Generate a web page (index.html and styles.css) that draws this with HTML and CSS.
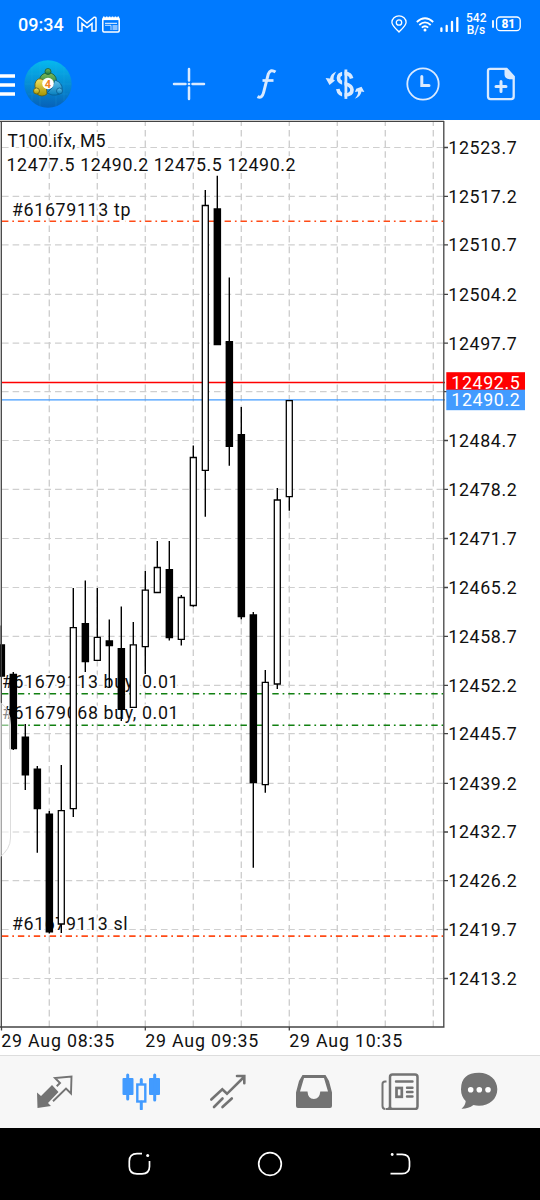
FILE: index.html
```html
<!DOCTYPE html>
<html lang="en">
<head>
<meta charset="utf-8">
<title>T100.ifx, M5</title>
<link rel="stylesheet" href="styles.css">
</head>
<body>
<div class="screen">
  <header class="top">
    <div class="status">
      <div class="status-left">
        <span class="clock">09:34</span>
        <svg class="mail" width="20" height="16" viewBox="0 0 20 16"><path d="M1 14.2V2.5Q1 .9 2.8 1.2L10 7l7.200-5.800Q19 .9 19 2.500V14.200Q19 15 18.200 15H15V7.500L10 11.500 5 7.500V15H1.800Q1 15 1 14.200Z" fill="none" stroke="#fff" stroke-width="1.500"/></svg>
        <svg width="18" height="17" viewBox="0 0 18 17"><rect x=".8" y="2" width="16.400" height="14" rx="1.200" fill="none" stroke="#fff" stroke-width="1.500"/><path d="M1 3h16" stroke="#fff" stroke-width="2.200"/><path d="M1 1.200h16" stroke="#fff" stroke-width="1.500" stroke-dasharray="1.600 1.300"/><path d="M3 7.300h12" stroke="#fff"/><path d="M3 9.300h6v4.700" fill="none" stroke="#fff" stroke-width=".8"/><path d="M10.500 9h5v5h-5z" fill="#8cc2ff"/></svg>
      </div>
      <div class="status-right">
        <svg width="16" height="18" viewBox="0 0 16 18"><path d="M8 17C4.500 13.500.9 10.500.9 7.300a7.100 6.500 0 0 1 14.200 0C15.100 10.500 11.500 13.500 8 17Z" fill="none" stroke="#fff" stroke-width="1.300"/><circle cx="8" cy="7.500" r="2.700" fill="none" stroke="#fff" stroke-width="1.300"/></svg>
        <svg class="wifi" width="18" height="15" viewBox="0 0 18 15"><g fill="none" stroke="#fff" stroke-width="1.800"><path d="M.8 5Q9-2.500 17.200 5"/><path d="M3.300 8Q9 2.800 14.700 8"/><path d="M5.800 10.700Q9 7.800 12.200 10.700"/></g><circle cx="9" cy="13" r="1.500" fill="#fff"/></svg>
        <svg class="signal" width="19" height="15" viewBox="0 0 19 15"><path d="M1.400 11.500V14M6.700 9V14M12 5V14M17.300 1V14" stroke="#fff" stroke-width="2.300" stroke-linecap="round"/></svg>
        <div class="speed"><span>542</span><span>B/s</span></div>
        <svg width="29" height="16" viewBox="0 0 29 16"><path d="M1 5v6" stroke="#fff" stroke-width="1.800" stroke-linecap="round"/><rect x="4.600" y="1" width="23.600" height="13.600" rx="3.500" fill="none" stroke="#fff" stroke-width="1.300"/><text class="battery" x="16.300" y="11.900" text-anchor="middle">81</text></svg>
      </div>
    </div>
    <div class="toolbar">
      <svg class="menu" width="15" height="24" viewBox="0 0 15 24"><path d="M0 3h15M0 12h15M0 21h15" stroke="#fff" stroke-width="3.600"/></svg>
      <svg class="logo" width="48" height="48" viewBox="0 0 48 48">
        <defs>
          <linearGradient id="sky" x2="0" y2="1"><stop stop-color="#06b9ef"/><stop offset="1" stop-color="#0761b8"/></linearGradient>
          <linearGradient id="green" x2="0" y2="1"><stop stop-color="#7dba58"/><stop offset="1" stop-color="#167846"/></linearGradient>
          <linearGradient id="gold" x2="0" y2="1"><stop stop-color="#f3e263"/><stop offset="1" stop-color="#a39300"/></linearGradient>
          <linearGradient id="aqua" x2="0" y2="1"><stop stop-color="#62c0e8"/><stop offset="1" stop-color="#087fbe"/></linearGradient>
        </defs>
        <circle cx="24" cy="24" r="23.700" fill="url(#sky)"/>
        <path d="M8 7v34M16 2v44M32 2v44M40 7v34M4 14h40M1 24h46M4 34h40" stroke="#2fb4e8" stroke-width=".5" opacity=".35"/>
        <path d="M16 23q-2-7 5-10h6q7 3 5 11l-5 3h-7z" fill="url(#green)" stroke="#155b37" stroke-width=".8"/>
        <circle cx="24" cy="11.500" r="3" fill="url(#green)" stroke="#155b37" stroke-width=".8"/>
        <path d="M14 19q6-1 8 5l1 10q-5 4-10 0l-1-4q-3-7 2-11z" fill="url(#gold)" stroke="#5f5a12" stroke-width=".8"/>
        <circle cx="12.500" cy="31" r="3" fill="url(#gold)" stroke="#5f5a12" stroke-width=".8"/>
        <path d="M31 20q8 3 7 10-1 6-10 5l-5-2 5-5z" fill="url(#aqua)" stroke="#075b91" stroke-width=".8"/>
        <circle cx="35.500" cy="31" r="3" fill="url(#aqua)" stroke="#075b91" stroke-width=".8"/>
        <circle cx="24" cy="23.500" r="5.800" fill="#fff"/>
        <text class="four" x="24" y="27.500" text-anchor="middle">4</text>
      </svg>
      <div class="tools">
        <svg width="34" height="34" viewBox="0 0 34 34"><path d="M17 2v11.500M17 20.500V32M2 17h11.500M20.500 17H32" stroke="#d9eaff" stroke-width="2.500" stroke-linecap="round"/><circle cx="17" cy="17" r="1.300" fill="#d9eaff"/></svg>
        <svg width="34" height="34" viewBox="0 0 34 34"><path d="M25.500 5Q20.500 1.500 18.300 7L13.600 25.500Q12 32 7.500 29.700" fill="none" stroke="#d9eaff" stroke-width="3"/><path d="M12.500 13.500h11" stroke="#d9eaff" stroke-width="2.700"/></svg>
        <svg width="40" height="34" viewBox="0 0 40 34"><path d="M26.600 11.500Q25.500 6.300 20 6.300 13.500 6.300 13.500 11 13.500 15 20 16.700 27 18.500 27 22.800 27 28 20 28 14 28 12.800 22" fill="none" stroke="#d9eaff" stroke-width="3.700"/><path d="M18.300 3v28" stroke="#007aff" stroke-width="2.400"/><path d="M20.900 2.500v29.400" stroke="#d9eaff" stroke-width="2.800"/><path d="M11.200 4.500Q5.500 7 5 11.500L.6 11 4.500 18 10 13.500 8.400 12.500Q8.500 8.500 11.200 4.500Z" fill="#d9eaff"/><path d="M29.800 31.800Q33.500 28 33 24.600L30 25 31.200 21.800 36.500 19.800 39.400 25 36.500 24.500Q35.500 29.800 29.800 31.800Z" fill="#d9eaff"/></svg>
        <svg width="34" height="34" viewBox="0 0 34 34"><circle cx="17" cy="17" r="15.700" fill="none" stroke="#d9eaff" stroke-width="1.800"/><path d="M15.800 9.500v9h7.200" fill="none" stroke="#d9eaff" stroke-width="3" stroke-linecap="round"/></svg>
        <svg width="30" height="34" viewBox="0 0 30 34"><path d="M4 1.800h16.500l7.200 8V29.500q0 2.600-2.600 2.600H4.500Q2 32.100 2 29.500V3.800q0-2 2-2Z" fill="none" stroke="#d9eaff" stroke-width="2.300"/><path d="M18.500 1.500h2.800l7 8v2.700h-4.500q-5.500-.5-5.300-5z" fill="#d9eaff"/><path d="M15 14.500v10M10 19.500h10" stroke="#d9eaff" stroke-width="3" stroke-linecap="round"/></svg>
      </div>
    </div>
  </header>

  <main class="chart">
    <svg width="540" height="935" viewBox="0 120 540 935">
      <path class="grid" d="M2 147.500H443M2 196.300H443M2 244.800H443M2 294.300H443M2 343.200H443M2 391.700H443M2 440.500H443M2 489.300H443M2 538.500H443M2 587.500H443M2 636.300H443M2 685.300H443M2 733.600H443M2 783.300H443M2 832H443M2 880.700H443M2 929.500H443M2 978.500H443"/>
      <path class="grid vertical" d="M49.300 1027V122M97.300 1027V122M145.300 1027V122M193.300 1027V122M241.300 1027V122M289.300 1027V122M337.300 1027V122M385.300 1027V122M433.300 1027V122"/>

      <path class="order target" d="M2 221.200H443"/>
      <path class="order stop" d="M2 936.200H443"/>
      <path class="order buy" d="M2 693.700H443M2 725.200H443"/>
      <path class="ask" d="M2 382.500H445"/>
      <path class="bid" d="M2 399.900H445"/>

      <g class="label halo">
        <text x="7.500" y="147" textLength="98">T100.ifx, M5</text>
        <text x="6.500" y="171" textLength="289">12477.5 12490.2 12475.5 12490.2</text>
        <text x="12" y="215.500" textLength="118.500">#61679113 tp</text>
        <text x="2" y="688" textLength="176.500">#61679113 buy, 0.01</text>
        <text x="2" y="719.300" textLength="176.500">#61679068 buy, 0.01</text>
        <text x="12" y="930.300" textLength="115.500">#61679113 sl</text>
      </g>

      <!-- wicks -->
      <path class="wick" d="M1.300 625.500V677M13.300 672V750M25.300 724V790M37.300 766V852.700M49.300 811V933.500M61.300 765V933M73.300 588V817M85.300 580.500V672M97.300 588V661M109.300 619.500V687M121.300 606.500V721M133.300 622V708M145.300 571V674M157.300 541V593M169.300 541V640.500M181.300 595V645.500M193.300 445.500V606.800M205.300 190V516.700M217.300 175.700V345M229.300 277.500V465.700M241.300 407V619.300M253.300 612V867.700M265.300 670V792.700M277.300 488V689M289.300 400V510.700"/>
      <!-- falling candles -->
      <path class="fall" d="M0 644.300h5.100v32.500H0zM9.600 673.700h7.500v75.600h-7.500zM21.600 736.600h7.500v39h-7.500zM33.600 768.600h7.500V809.300h-7.500zM45.600 813.600h7.500V932.600h-7.500zM81.600 623h7.500v39.300h-7.500zM105.600 640.300h7.500v6h-7.500zM117.600 648h7.500v62h-7.500zM165.600 569h7.500v69.300h-7.500zM213.600 208.300h7.500V345.200h-7.500zM225.600 341h7.500V447h-7.500zM237.600 434h7.500V617.200h-7.500zM249.600 614.200h7.500V783.200h-7.500z"/>
      <!-- rising candles -->
      <path class="rise" d="M58.300 810.700h6V924h-6zM70.300 627.600h6V808.700h-6zM94.300 637.300h6V660.300h-6zM130.300 644.800h6V707.300h-6zM142.300 590.200h6V646.700h-6zM154.300 567.500h6V592.500h-6zM178.300 597.500h6V639.300h-6zM190.300 457.500h6V605.500h-6zM202.300 205.500h6V470.300h-6zM262.300 682.300h6V784.700h-6zM274.300 500h6V684h-6zM286.300 400.700h6V496.700h-6z"/>

      <path class="frame" d="M0 121.300H444M1.300 121V1027M0 1027H444.500M443.800 121V1027.500M1.500 1027v3.500M145.300 1027v3.500M289.300 1027v3.500"/>
      <path class="frame" d="M444 147.500h4M444 196.300h4M444 244.800h4M444 294.300h4M444 343.200h4M444 391.700h4M444 440.500h4M444 489.300h4M444 538.500h4M444 587.500h4M444 636.300h4M444 685.300h4M444 733.600h4M444 783.300h4M444 832h4M444 880.700h4M444 929.500h4M444 978.500h4"/>
      <path class="handle" d="M-1 702Q10.500 708 10.500 725V838Q10.500 849-1 858Z"/>

      <g class="label">
        <text x="448.300" y="153.800" textLength="68.500">12523.7</text>
        <text x="448.300" y="202.600" textLength="68.500">12517.2</text>
        <text x="448.300" y="251.200" textLength="68.500">12510.7</text>
        <text x="448.300" y="300.600" textLength="68.500">12504.2</text>
        <text x="448.300" y="349.500" textLength="68.500">12497.7</text>
        <text x="448.300" y="446.800" textLength="68.500">12484.7</text>
        <text x="448.300" y="495.600" textLength="68.500">12478.2</text>
        <text x="448.300" y="544.800" textLength="68.500">12471.7</text>
        <text x="448.300" y="593.800" textLength="68.500">12465.2</text>
        <text x="448.300" y="642.600" textLength="68.500">12458.7</text>
        <text x="448.300" y="691.600" textLength="68.500">12452.2</text>
        <text x="448.300" y="740" textLength="68.500">12445.7</text>
        <text x="448.300" y="789.600" textLength="68.500">12439.2</text>
        <text x="448.300" y="838.300" textLength="68.500">12432.7</text>
        <text x="448.300" y="887" textLength="68.500">12426.2</text>
        <text x="448.300" y="935.800" textLength="68.500">12419.7</text>
        <text x="448.300" y="984.800" textLength="68.500">12413.2</text>
        <text x="1.300" y="1047.300" textLength="113">29 Aug 08:35</text>
        <text x="145.300" y="1047.300" textLength="113">29 Aug 09:35</text>
        <text x="289.300" y="1047.300" textLength="113">29 Aug 10:35</text>
      </g>
      <rect x="446.300" y="372.200" width="78.700" height="18" fill="#f00"/>
      <rect x="446.300" y="389.700" width="78.700" height="20.500" fill="#429bff"/>
      <g class="label tag">
        <text x="451.300" y="388.500" textLength="68.500">12492.5</text>
        <text x="451.300" y="406.200" textLength="68.500">12490.2</text>
      </g>
    </svg>
  </main>

  <nav class="tabs">
    <svg width="38" height="38" viewBox="0 0 38 38"><path d="M1 20.500 5 24 16 13 22.500 20 12 31 15 34 1.500 36Z" fill="#737373"/><path d="M20.700 14.200 24 11 19 6 35.500 4.500 35 21.500 30 16.500 17 29.300" fill="none" stroke="#737373" stroke-width="1.900"/></svg>
    <svg width="38" height="38" viewBox="0 0 38 38"><g fill="#429bff"><rect x=".5" y="6" width="11" height="17" rx="1"/><rect x="27" y="6" width="11" height="17" rx="1"/></g><path d="M5.700 3V27M32.700 3V28M19.300 7.500v4M19.300 30v7" stroke="#429bff" stroke-width="3" stroke-linecap="round"/><rect x="15.300" y="12.500" width="8" height="17" fill="none" stroke="#429bff" stroke-width="2.400"/></svg>
    <svg width="38" height="38" viewBox="0 0 38 38"><path d="M2.300 27.500 13.300 17.300 18 21.800 34.500 5.500M28 4h7.300v7.300M5 35 13.500 26.500M13.500 35 22.800 26.500" fill="none" stroke="#737373" stroke-width="2.600" stroke-linecap="round"/></svg>
    <svg width="38" height="38" viewBox="0 0 38 38"><path d="M7.500 3h23L34 9l3 11.500V34q0 2-2 2H3q-2 0-2-2V20.500L4 9ZM9 6 5 19.500h7.500q.5 7.500 6.300 7.500t6.500-7.500H33L29 6Z" fill="#737373" fill-rule="evenodd"/></svg>
    <svg width="38" height="38" viewBox="0 0 38 38"><path d="M5.500 9.500H4Q1.500 9.500 1.500 12V34q0 3 3 3M5 37H34" fill="none" stroke="#737373" stroke-width="2"/><rect x="9" y="2.500" width="27.500" height="34.500" rx="2.500" fill="none" stroke="#737373" stroke-width="2.500"/><path d="M9 34q0 3-4 3" fill="none" stroke="#737373" stroke-width="2"/><path d="M15 9.500H31.500M26 15.700h5.500M26 20h5.500M26 24.500h5.500" stroke="#737373" stroke-width="2.400" stroke-linecap="round"/><rect x="15.500" y="16" width="5.300" height="8.800" fill="none" stroke="#737373" stroke-width="2.700"/></svg>
    <svg width="38" height="38" viewBox="0 0 38 38"><path d="M19 .8c10.500 0 18.300 7 18.300 16.500S29.500 33.800 19 33.800q-3 0-5.500-.8Q8 37 1.500 36.800 5.500 33.500 5.700 29 1 24.500 1 17.300 1 .8 19 .8Z" fill="#737373"/><g fill="#fff"><circle cx="10.700" cy="17.800" r="2.800"/><circle cx="19.300" cy="17.800" r="2.800"/><circle cx="28" cy="17.800" r="2.800"/></g></svg>
  </nav>

  <footer class="system">
    <svg width="24" height="24" viewBox="0 0 24 24"><path d="M15 1.700H10Q2.300 1.700 2.300 9.200v5.300Q2.300 21.800 10 21.800h5q7.500 0 7.500-7.300V9" fill="none" stroke="#fff" stroke-width="1.700"/><circle cx="20.700" cy="3.500" r="1.500" fill="#fff"/></svg>
    <svg width="26" height="26" viewBox="0 0 26 26"><circle cx="13" cy="13" r="11.300" fill="none" stroke="#fff" stroke-width="1.700"/></svg>
    <svg width="24" height="24" viewBox="0 0 24 24"><path d="M7.500 2.300H13q7.500 0 7.500 7.200v4.700Q20.500 21.600 13 21.600H1.500" fill="none" stroke="#fff" stroke-width="1.700"/><circle cx="3.200" cy="2.500" r="1.400" fill="#fff"/></svg>
  </footer>
</div>
</body>
</html>
```
FILE: styles.css
```css
body {
  margin: 0;
  background: #fff;
  font-family: Roboto, "Liberation Sans", sans-serif;
}

svg {
  display: block;
  flex: none;
}

.screen {
  display: flex;
  flex-direction: column;
  width: 540px;
  height: 1200px;
  overflow: hidden;
}

.top {
  height: 120px;
  background: #007aff;
  color: #fff;
}

.status {
  display: flex;
  justify-content: space-between;
  align-items: center;
  height: 48px;
  padding: 0 19px 0 18px;
}

.status-left,
.status-right {
  display: flex;
  align-items: center;
}

.clock {
  width: 59px;
  font-size: 18px;
  font-weight: 500;
}

.mail {
  margin-right: 5px;
}

.wifi {
  margin-left: 9px;
}

.signal {
  margin-left: 6px;
}

.speed {
  display: flex;
  flex-direction: column;
  width: 20px;
  margin: 0 6px 0 7px;
  font-size: 12px;
  font-weight: 500;
  line-height: 12px;
  text-align: center;
}

.battery {
  fill: #fff;
  font-size: 12px;
  font-weight: 800;
}

.toolbar {
  display: flex;
  align-items: center;
  height: 72px;
}

.menu {
  margin-top: 2px;
}

.logo {
  margin-left: 9px;
}

.four {
  fill: #f28322;
  font-size: 11px;
  font-weight: 700;
}

.tools {
  display: grid;
  grid-template-columns: repeat(5, 78px);
  justify-items: center;
  align-items: center;
  margin-left: auto;
}

.chart {
  height: 935px;
}

.grid {
  fill: none;
  stroke: #cfcfcf;
  stroke-width: 1.2;
  stroke-dasharray: 6.6 4;
}

.vertical {
  stroke-width: 1.4;
}

.order {
  fill: none;
  stroke-width: 1.5;
  stroke-dasharray: 6.4 3.9 1.7 3.9;
}

.target,
.stop {
  stroke: #ff4b16;
}

.stop {
  stroke-width: 1.8;
}

.buy {
  stroke: #118011;
}

.ask,
.bid {
  stroke: #f00;
  stroke-width: 1.4;
}

.bid {
  stroke: #429bff;
}

.label {
  fill: #111;
  font-size: 17.8px;
}

.halo {
  stroke: #fff;
  stroke-width: 4px;
  paint-order: stroke;
}

.tag {
  fill: #fff;
}

.wick,
.frame {
  fill: none;
  stroke: #000;
  stroke-width: 1.4;
}

.frame {
  stroke: #444;
  stroke-width: 1.3;
}

.fall {
  fill: #000;
}

.rise {
  fill: #fff;
  stroke: #000;
  stroke-width: 1.3;
}

.handle {
  fill: #fff;
  fill-opacity: 0.5;
  stroke: #ddd;
}

.tabs {
  display: grid;
  grid-template-columns: repeat(5, 86.3px) 72px;
  justify-items: center;
  align-items: center;
  box-sizing: border-box;
  height: 73px;
  padding: 0 0 3px 12px;
  border-top: 1px solid #ddd;
  background: #f7f7f7;
}

.system {
  display: flex;
  justify-content: center;
  align-items: center;
  gap: 106px;
  height: 72px;
  background: #000;
}
```
